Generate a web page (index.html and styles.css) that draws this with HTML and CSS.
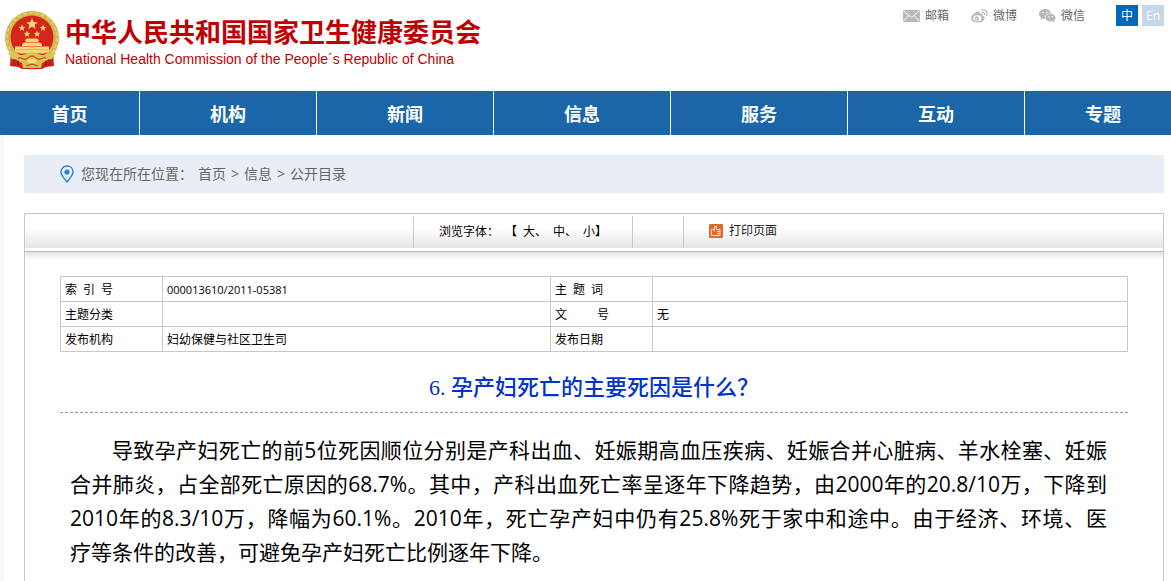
FILE: index.html
```
<!DOCTYPE html>
<html lang="zh-CN">
<head>
    <meta charset="UTF-8">
    <meta name="viewport" content="width=device-width,initial-scale=1.0">
    <title>6.孕产妇死亡的主要死因是什么？</title>
    <link rel="stylesheet" href="styles.css">
</head>
<body>
<header class="header">
    <a class="logo" href="#">
        <svg class="emblem" viewBox="0 0 56 60" width="56" height="60" aria-hidden="true">
            <path d="M7 40L6 56l8 1 4 2h20l4-2 8-1-1-16z" fill="#c9251c"/>
            <circle cx="28" cy="28" r="27" fill="#cdb548"/>
            <circle cx="28" cy="28" r="25" fill="none" stroke="#e2cf70" stroke-width="2" stroke-dasharray="4 2"/>
            <circle cx="28" cy="28" r="22" fill="none" stroke="#d8c258" stroke-width="1"/>
            <circle cx="28" cy="27" r="21.500" fill="#d6261c"/>
            <g fill="#f3d778">
                <path d="M28 8l1.600 4 4.200.2-3.300 2.700 1.200 4.100-3.700-2.300-3.700 2.300 1.200-4.100-3.300-2.700 4.200-.2z"/>
                <path d="M18 14.500l.9 2.300 2.500.1-1.900 1.600.7 2.400-2.200-1.300-2 1.300.6-2.400-1.900-1.600 2.400-.1z"/>
                <path d="M39 14.500l.9 2.300 2.500.1-1.900 1.600.7 2.400-2.200-1.300-2 1.300.6-2.400-1.900-1.600 2.400-.1z"/>
                <path d="M23 20.500l.9 2.300 2.500.1-1.900 1.600.7 2.400-2.200-1.300-2 1.300.6-2.400-1.900-1.600 2.400-.1z"/>
                <path d="M33 20.500l.9 2.300 2.500.1-1.900 1.600.7 2.400-2.200-1.300-2 1.300.6-2.400-1.900-1.600 2.400-.1z"/>
                <path d="M21 30l2-1.500h10l2 1.500-1 2H22zM18 34l2-1.500h16l2 1.500v2H18zM11 36.500h34v5l-5 2H16l-5-2z"/>
            </g>
            <path d="M12 39.500h32" stroke="#e3bb58"/>
            <path d="M4 43c7-1 9 3 14 2 4 0 5-3 10-3s6 3 10 3c5 1 7-3 14-2l-4 6c-5 1-7-2-11-1l-9 3-9-3c-4-1-6 2-11 1z" fill="#dcc353"/>
            <path d="M17 49l2 9h18l2-9-5 2-6 3-6-3z" fill="#dcc04f"/>
            <path d="M14 48c4-1 5 2 8 1s3-3 6-3 3 2 6 3 4-2 8-1" fill="none" stroke="#d6261c"/>
            <path d="M10 50v6M14 51v5M46 50v6M42 51v5" stroke="#8d150f"/>
            <path d="M22 56l6-2 6 2" fill="none" stroke="#d6261c"/>
            <ellipse cx="28" cy="51" rx="5" ry="2" fill="#f2dc84"/>
        </svg>
        <span class="logo-text">
            <strong class="logo-cn">中华人民共和国国家卫生健康委员会</strong>
            <span class="logo-en">National Health Commission of the People´s Republic of China</span>
        </span>
    </a>
    <div class="top-links">
        <a href="#">
            <svg viewBox="0 0 17 12" width="17" height="12" aria-hidden="true">
                <path d="M0 0h17v12H0z" fill="#b9b9b9"/>
                <path d="M0 .5l8.500 7 8.500-7M0 11.500l6-6M17 11.500l-6-6" fill="none" stroke="#fff"/>
            </svg>
            邮箱
        </a>
        <a href="#">
            <svg viewBox="0 0 17 14" width="17" height="14" aria-hidden="true">
                <path d="M6 3c2-1 3 0 2.500 1.500C11 4 12 5 11.500 6.500c4 1 2.500 7-5 7C-1 13.500-1.500 8 3 4.500 4 3.700 5 3.200 6 3z" fill="#b9b9b9"/>
                <ellipse cx="6.300" cy="9.300" rx="4.200" ry="3" fill="#fff"/>
                <circle cx="5.800" cy="9.500" r="2.200" fill="#b9b9b9"/>
                <circle cx="5.200" cy="9.900" r=".8" fill="#fff"/>
                <path d="M10.500 1c4-1 6.500 2 5 6M11 3.500c2-.4 3 .8 2.500 2.500" fill="none" stroke="#b9b9b9" stroke-width="1.300"/>
            </svg>
            微博
        </a>
        <a href="#">
            <svg viewBox="0 0 17 14" width="17" height="14" aria-hidden="true">
                <path d="M6 0c3.500 0 6 2.200 6 5s-2.500 5-6 5l-2-.3L1.500 11l.6-2.300C.8 7.800 0 6.500 0 5c0-2.800 2.500-5 6-5z" fill="#b9b9b9"/>
                <path d="M11.500 4.500c3 0 5.300 1.900 5.300 4.200 0 1.300-.7 2.400-1.700 3.200l.4 1.900-2-1.100-2 .2c-3 0-5.300-1.900-5.300-4.200s2.300-4.200 5.300-4.200z" fill="#b9b9b9" stroke="#fff" stroke-width=".6"/>
                <g fill="#fff"><circle cx="4" cy="3.500" r=".8"/><circle cx="8" cy="3.500" r=".8"/><circle cx="9.800" cy="7.500" r=".7"/><circle cx="13.200" cy="7.500" r=".7"/></g>
            </svg>
            微信
        </a>
        <div class="lang">
            <a class="active" href="#">中</a>
            <a href="#">En</a>
        </div>
    </div>
</header>

<nav class="nav">
    <a href="#">首页</a>
    <a href="#">机构</a>
    <a href="#">新闻</a>
    <a href="#">信息</a>
    <a href="#">服务</a>
    <a href="#">互动</a>
    <a href="#">专题</a>
</nav>

<main class="main">
    <div class="crumbs">
        <svg viewBox="0 0 14 18" width="14" height="18" aria-hidden="true">
            <path d="M7 1c3.500 0 6 2.500 6 6 0 3-3 6.500-6 10-3-3.500-6-7-6-10 0-3.500 2.500-6 6-6z" fill="none" stroke="#2486d6" stroke-width="1.400"/>
            <circle cx="7" cy="7" r="2.600" fill="#2486d6"/>
        </svg>
        <span class="crumbs-label">您现在所在位置：</span>
        <a href="#">首页</a><span>&gt;</span><a href="#">信息</a><span>&gt;</span><a href="#">公开目录</a>
    </div>

    <div class="panel">
        <div class="toolbar">
            <div class="tool-blank"></div>
            <div class="tool-size">
                <span>浏览字体：</span>
                <span class="sizes">【<a href="#">大</a>、<a href="#">中</a>、<a href="#">小</a>】</span>
            </div>
            <div class="tool-gap"></div>
            <button class="print" type="button">
                <svg viewBox="0 0 14 14" width="14" height="14" aria-hidden="true">
                    <rect width="14" height="14" rx="1" fill="#e4672f"/>
                    <path d="M5.500 5.500h-3v6h8.500v-6H7.500v-3h-2v5M8 7.500h3M8 9.500h3" fill="none" stroke="#ffe6cf"/>
                </svg>
                打印页面
            </button>
        </div>

        <div class="content">
            <table class="info">
                <tr>
                    <th scope="row">索&ensp;引&ensp;号</th>
                    <td class="code">000013610/2011-05381</td>
                    <th scope="row">主&ensp;题&ensp;词</th>
                    <td class="wide"></td>
                </tr>
                <tr>
                    <th scope="row">主题分类</th>
                    <td></td>
                    <th scope="row">文&emsp;&emsp;&ensp;号</th>
                    <td>无</td>
                </tr>
                <tr>
                    <th scope="row">发布机构</th>
                    <td>妇幼保健与社区卫生司</td>
                    <th scope="row">发布日期</th>
                    <td></td>
                </tr>
            </table>

            <h1 class="title">6. 孕产妇死亡的主要死因是什么？</h1>

            <p class="article">导致孕产妇死亡的前5位死因顺位分别是产科出血、妊娠期高血压疾病、妊娠合并心脏病、羊水栓塞、妊娠合并肺炎，占全部死亡原因的68.7%。其中，产科出血死亡率呈逐年下降趋势，由2000年的20.8/10万，下降到2010年的8.3/10万，降幅为60.1%。2010年，死亡孕产妇中仍有25.8%死于家中和途中。由于经济、环境、医<span class="keep">疗等</span>条件的改善，可避免孕产妇死亡比例逐年下降。</p>
        </div>
    </div>
</main>
</body>
</html>
```

FILE: styles.css
```
* {
    box-sizing: border-box;
}

body {
    margin: 0;
    min-height: 100vh;
    display: flex;
    flex-direction: column;
    background: #fff;
    color: #000;
    font: 12px/18px "Open Sans", "Noto Sans CJK SC", sans-serif;
}

a {
    color: inherit;
    text-decoration: none;
}

/* header */
.header {
    display: flex;
    justify-content: space-between;
    align-items: flex-start;
    height: 91px;
    padding-left: 4px;
}

.logo {
    display: flex;
    gap: 5px;
    padding-top: 10px;
    color: #c00000;
}

.logo-text {
    display: flex;
    flex-direction: column;
    padding-top: 4px;
}

.logo-cn {
    font-size: 26px;
    line-height: 36px;
    font-weight: bold;
}

.logo-en {
    font: 14px/18px "Liberation Sans", sans-serif;
}

.top-links {
    display: flex;
    gap: 22px;
    padding: 5px 7px 0 0;
    color: #666;
    line-height: 22px;
}

.top-links > a {
    display: flex;
    align-items: center;
    gap: 5px;
}

.lang {
    display: flex;
    gap: 4px;
    margin-left: 9px;
}

.lang a {
    width: 22px;
    height: 21px;
    line-height: 21px;
    text-align: center;
    color: #fff;
    background: #c3d9ea;
}

.lang .active {
    background: #0068b7;
}

/* main menu */
.nav {
    display: grid;
    grid-template-columns: 140fr repeat(5, 177fr) 146fr;
    background: #1a66a8;
}

.nav a {
    height: 44px;
    border-right: 1px solid #fff;
    color: #fff;
    font-size: 18px;
    font-weight: bold;
    line-height: 46px;
    text-align: center;
}

.nav a:last-child {
    border-right: 0;
    padding-left: 10px;
}

.main {
    flex: 1;
    display: flex;
    flex-direction: column;
    gap: 20px;
    padding: 20px 7px 0 20px;
    border-left: 4px solid #f7f7f7;
}

.crumbs {
    display: flex;
    align-items: center;
    gap: 5px;
    height: 38px;
    padding-left: 36px;
    background: #e9eef6;
    color: #666;
    font-size: 14px;
}

.crumbs-label {
    margin-left: 2px;
}

/* document panel */
.panel {
    flex: 1;
    border: 1px solid #c8c8c8;
    border-bottom: 0;
}

.toolbar {
    display: flex;
    height: 38px;
    padding: 2px 0 3px;
    border-bottom: 1px solid #b8b8b8;
    background: linear-gradient(#fff 40%, #e6e6e6) no-repeat 0 0 / 100% 34px;
}

.tool-blank {
    width: 388px;
}

.tool-size {
    display: flex;
    justify-content: center;
    gap: 6px;
    width: 220px;
    border: 1px solid #c8c8c8;
    border-width: 0 1px;
    line-height: 32px;
}

.sizes a {
    margin-left: 6px;
}

.tool-gap {
    width: 51px;
    border-right: 1px solid #c8c8c8;
}

.print {
    display: flex;
    align-items: center;
    gap: 6px;
    padding: 0 25px 2px;
    border: 0;
    background: none;
    color: #222;
    font: inherit;
    cursor: pointer;
}

.content {
    padding: 24px 35px 10px;
    background: linear-gradient(#e4e4e4, #fff) no-repeat 0 0 / 100% 8px;
}

.info {
    width: 100%;
    border-collapse: collapse;
    table-layout: fixed;
}

.info th,
.info td {
    height: 25px;
    padding: 1px 4px 0;
    border: 1px solid #c8c8c8;
    font-weight: normal;
    text-align: left;
}

.info th {
    width: 102px;
}

.info .code {
    font-size: 11px;
}

.info .wide {
    width: 475px;
}

.title {
    margin: 16px 0 0;
    padding-bottom: 4px;
    border-bottom: 1px dashed #999;
    color: #0033cc;
    font: 500 22px/40px "Liberation Serif", "Noto Sans CJK SC", serif;
    text-align: center;
}

.article {
    margin: 20px 0 0;
    padding: 0 21px 0 10px;
    font-size: 21px;
    line-height: 34px;
    text-align: justify;
    text-indent: 42px;
}

.keep {
    white-space: nowrap;
}
```
